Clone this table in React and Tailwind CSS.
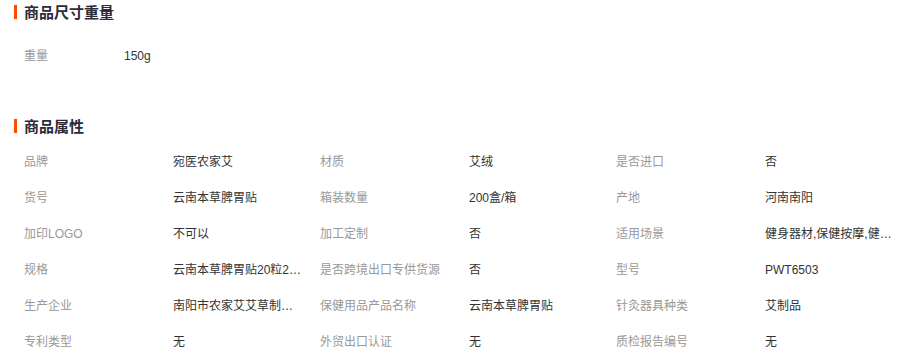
const attrs = [
  ["品牌", "宛医农家艾"],
  ["材质", "艾绒"],
  ["是否进口", "否"],
  ["货号", "云南本草脾胃贴"],
  ["箱装数量", "200盒/箱"],
  ["产地", "河南南阳"],
  ["加印LOGO", "不可以"],
  ["加工定制", "否"],
  ["适用场景", "健身器材,保健按摩,健康养生"],
  ["规格", "云南本草脾胃贴20粒2盒装"],
  ["是否跨境出口专供货源", "否"],
  ["型号", "PWT6503"],
  ["生产企业", "南阳市农家艾艾草制品有限公司"],
  ["保健用品产品名称", "云南本草脾胃贴"],
  ["针灸器具种类", "艾制品"],
  ["专利类型", "无"],
  ["外贸出口认证", "无"],
  ["质检报告编号", "无"],
];

function Heading({ children }) {
  return (
    <div className="flex h-[24px] items-center">
      <span className="ml-[14px] h-[14px] w-[3px] bg-[#ff4a00]" />
      <h2 className="ml-[7px] text-[15px] font-bold leading-none text-[#2b2b3a]">
        {children}
      </h2>
    </div>
  );
}

function Cell({ label, value }) {
  return (
    <div className="flex h-[36px] items-center">
      <span className="w-[149px] shrink-0 text-[#999]">{label}</span>
      <span className="w-[147px] shrink-0">
        <span className="block max-w-[130px] truncate text-[#333]">{value}</span>
      </span>
    </div>
  );
}

export default function App() {
  return (
    <div className="h-[357px] w-[907px] overflow-hidden bg-white font-['Liberation_Sans','Noto_Sans_CJK_SC',sans-serif] text-[12px]">
      <Heading>商品尺寸重量</Heading>
      <div className="mt-[14px] flex h-[36px] items-center pl-[24px]">
        <span className="w-[100px] text-[#999]">重量</span>
        <span className="text-[#333]">150g</span>
      </div>
      <div className="mt-[40px]">
        <Heading>商品属性</Heading>
      </div>
      <div className="mt-[6px] grid grid-cols-[repeat(3,296px)] pl-[24px]">
        {attrs.map(([label, value]) => (
          <Cell key={label} label={label} value={value} />
        ))}
      </div>
    </div>
  );
}
